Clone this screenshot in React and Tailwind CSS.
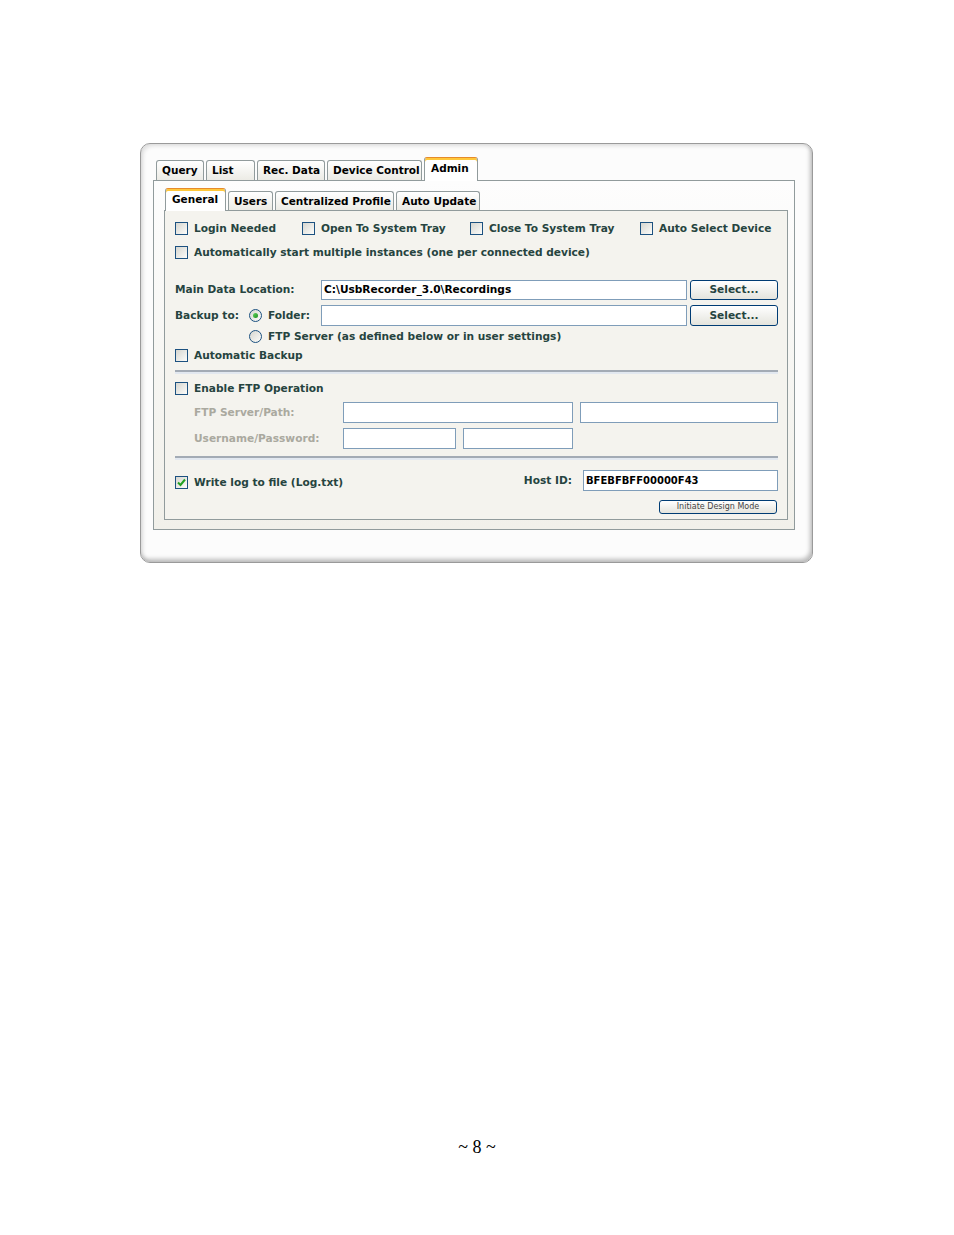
function Checkbox({ checked = false, label, className = '' }) {
  return (
    <div className={`flex items-center ${className}`}>
      <span className="flex h-[13px] w-[13px] shrink-0 items-center justify-center border border-[#1c5180] bg-gradient-to-br from-[#d6d6d0] to-[#fcfcfa]">
        {checked && (
          <svg width="9" height="9" viewBox="0 0 9 9">
            <path d="M1 4.5 L3.5 7 L8 1.5" fill="none" stroke="#21a121" strokeWidth="2" />
          </svg>
        )}
      </span>
      <span className="ml-[6px] whitespace-nowrap">{label}</span>
    </div>
  );
}

function Radio({ checked = false, label }) {
  return (
    <div className="flex items-center">
      <span className="flex h-[13px] w-[13px] shrink-0 items-center justify-center rounded-full border border-[#1c5180] bg-gradient-to-br from-[#d6d6d0] to-[#fcfcfa]">
        {checked && (
          <span className="h-[5px] w-[5px] rounded-full bg-gradient-to-br from-[#5fd35f] to-[#1a8f1a]" />
        )}
      </span>
      <span className="ml-[6px] whitespace-nowrap">{label}</span>
    </div>
  );
}

function TextBox({ value = '', className = '' }) {
  return (
    <div
      className={`flex shrink-0 items-center overflow-hidden whitespace-nowrap border border-[#7f9db9] bg-white pl-[2px] text-black ${className}`}
    >
      {value}
    </div>
  );
}

function XpButton({ children, className = '' }) {
  return (
    <div
      className={`flex shrink-0 items-center justify-center rounded-[3px] border border-[#003c74] bg-gradient-to-b from-white to-[#e4e4dd] ${className}`}
    >
      {children}
    </div>
  );
}

function Tab({ label, width, active = false, small = false }) {
  if (active) {
    return (
      <div
        className={`relative z-10 -mb-[1px] flex items-start rounded-t-[3px] border border-b-0 border-[#919b9c] border-t-[#e68b2c] bg-white pl-[6px] pt-[3px] text-black shadow-[inset_0_2px_0_#ffc83c] ${
          small ? 'h-[23px]' : 'h-[24px]'
        } ${width}`}
      >
        {label}
      </div>
    );
  }
  return (
    <div
      className={`flex items-center rounded-t-[3px] border border-b-0 border-[#919b9c] bg-gradient-to-b from-white to-[#ecebe5] pl-[5px] pt-[1px] text-black ${
        small ? 'h-[19px]' : 'h-[20px]'
      } ${width}`}
    >
      {label}
    </div>
  );
}

function Separator() {
  return (
    <div>
      <div className="h-[2px] bg-[#a3abb5]" />
      <div className="h-[2px] bg-[#e2e8f0]" />
    </div>
  );
}

export default function App() {
  return (
    <div className="h-[1235px] w-[954px] bg-white pt-[143px] font-['DejaVu_Sans',Verdana,sans-serif] text-[10.6px] font-bold text-[#264440]">
      <div className="ml-[140px] h-[420px] w-[673px] rounded-[10px] border border-[#9a9a9a] bg-[#fcfcfc] pl-[12px] pt-[14px] shadow-[inset_2px_2px_4px_rgba(0,0,0,0.12),inset_-2px_-3px_4px_rgba(0,0,0,0.25)]">
        {/* top tabs */}
        <div className="flex h-[22px] items-end gap-[2px] pl-[3px] text-[10.5px]">
          <Tab label="Query" width="w-[48px]" />
          <Tab label="List" width="w-[49px]" />
          <Tab label="Rec. Data" width="w-[68px]" />
          <Tab label="Device Control" width="w-[95px]" />
          <Tab label="Admin" width="w-[54px]" active />
        </div>

        <div className="h-[350px] w-[642px] border border-[#919b9c] bg-gradient-to-b from-[#fdfdfd] to-[#f1f0ea] pl-[10px] pt-[8px]">
          {/* sub tabs */}
          <div className="flex h-[21px] items-end gap-[2px] pl-[1px] text-[10.5px]">
            <Tab label="General" width="w-[61px]" active small />
            <Tab label="Users" width="w-[45px]" small />
            <Tab label="Centralized Profile" width="w-[119px]" small />
            <Tab label="Auto Update" width="w-[84px]" small />
          </div>

          <div className="h-[310px] w-[624px] border border-[#919b9c] bg-[#f4f3ee] pl-[10px] pr-[9px] pt-[8px]">
            <div className="flex h-[20px] items-center">
              <Checkbox label="Login Needed" className="w-[127px]" />
              <Checkbox label="Open To System Tray" className="w-[168px]" />
              <Checkbox label="Close To System Tray" className="w-[170px]" />
              <Checkbox label="Auto Select Device" />
            </div>

            <div className="mt-[4px] flex h-[20px] items-center">
              <Checkbox label="Automatically start multiple instances (one per connected device)" />
            </div>

            <div className="mt-[17px] flex h-[20px] items-center">
              <span className="w-[146px]">Main Data Location:</span>
              <TextBox value="C:\UsbRecorder_3.0\Recordings" className="h-[20px] w-[366px]" />
              <XpButton className="ml-[3px] h-[20px] w-[88px]">Select...</XpButton>
            </div>

            <div className="mt-[5px] flex h-[21px] items-center">
              <span className="w-[74px]">Backup to:</span>
              <div className="w-[72px]">
                <Radio checked label="Folder:" />
              </div>
              <TextBox className="h-[21px] w-[366px]" />
              <XpButton className="ml-[3px] h-[21px] w-[88px]">Select...</XpButton>
            </div>

            <div className="mt-[2px] flex h-[18px] items-center pl-[74px]">
              <Radio label="FTP Server (as defined below or in user settings)" />
            </div>

            <div className="mt-[1px] flex h-[18px] items-center">
              <Checkbox label="Automatic Backup" />
            </div>

            <div className="mt-[5px]">
              <Separator />
            </div>

            <div className="mt-[6px] flex h-[18px] items-center">
              <Checkbox label="Enable FTP Operation" />
            </div>

            <div className="mt-[4px] flex h-[21px] items-center">
              <span className="w-[168px] pl-[19px] text-[#aaa99f]">FTP Server/Path:</span>
              <TextBox className="h-[21px] w-[230px]" />
              <TextBox className="ml-[7px] h-[21px] w-[198px]" />
            </div>

            <div className="mt-[5px] flex h-[21px] items-center">
              <span className="w-[168px] pl-[19px] text-[#aaa99f]">Username/Password:</span>
              <TextBox className="h-[21px] w-[113px]" />
              <TextBox className="ml-[7px] h-[21px] w-[110px]" />
            </div>

            <div className="mt-[7px]">
              <Separator />
            </div>

            <div className="mt-[10px] flex h-[21px] items-center justify-between">
              <Checkbox checked label="Write log to file (Log.txt)" className="mt-[5px]" />
              <div className="flex items-center">
                <span>Host ID:</span>
                <TextBox value="BFEBFBFF00000F43" className="ml-[11px] h-[21px] w-[195px] text-[10px]" />
              </div>
            </div>

            <div className="mt-[9px] flex justify-end pr-[1px]">
              <XpButton className="h-[14px] w-[118px] text-[8px] font-normal text-[#444]">
                Initiate Design Mode
              </XpButton>
            </div>
          </div>
        </div>
      </div>

      <div className="mt-[574px] text-center font-['Liberation_Serif',serif] text-[18px] leading-[20px] font-normal text-black">
        ~ 8 ~
      </div>
    </div>
  );
}
